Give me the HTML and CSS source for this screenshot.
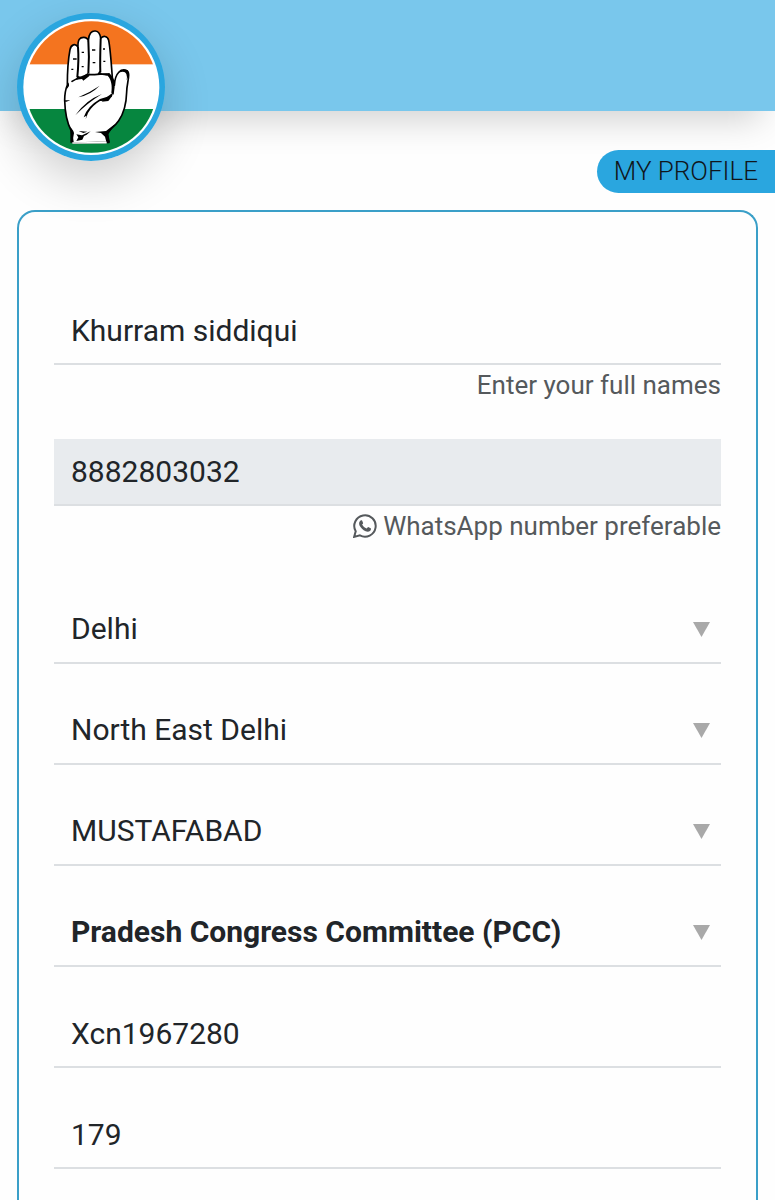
FILE: index.html
```html
<!DOCTYPE html>
<html lang="en">
<head>
    <meta charset="UTF-8">
    <meta name="viewport" content="width=device-width, initial-scale=1.0">
    <title>My Profile</title>
    <link rel="stylesheet" href="styles.css">
</head>
<body>

    <header class="topbar">
        <a href="#" class="logo" aria-label="Home">
            <svg viewBox="51 38 444 444" aria-hidden="true">
                <defs>
                    <clipPath id="disc"><circle cx="274" cy="260" r="197"/></clipPath>
                </defs>
                <circle cx="273" cy="260" r="222" fill="#2aa6df"/>
                <circle cx="274" cy="260" r="204" fill="#fff"/>
                <g clip-path="url(#disc)">
                    <rect x="70" y="55" width="410" height="137" fill="#f4741f"/>
                    <rect x="70" y="326" width="410" height="140" fill="#06863f"/>
                </g>
                <!-- hand -->
                <path d="M219 428 L214 392 C202 370 195 340 194 300 C194 280 197 266 202 254 C202 215 204 180 210 148 C213 132 226 128 234 140 C233 118 239 111 251 111 C258 111 263 115 265 121 C266 100 275 91 286 92 C296 93 301 101 302 115 C308 105 323 106 326 120 C331 145 334 190 337 232 C341 240 342 248 343 255 C344 238 348 224 357 215 C367 205 386 206 386 224 C386 240 380 256 380 275 C379 312 371 340 356 361 C345 377 332 386 322 396 L327 426 Z" fill="#fff" stroke="#000" stroke-width="5" stroke-linejoin="round"/>
                <path d="M234 140 C236 166 235 200 232 230 M265 121 C267 150 267 190 265 219 M302 115 C301 145 300 185 301 216" fill="none" stroke="#000" stroke-width="6"/>
                <!-- palm edge -->
                <path d="M216 243 C232 232 248 230 266 222 C284 226 300 218 320 222" fill="none" stroke="#000" stroke-width="5" stroke-linecap="round"/>
                <path d="M232 226 L246 231 L263 218 L269 226 L250 241 L246 236 L228 238 Z M298 212 L306 220 L328 218 L338 230 L344 260 L341 283 L334 277 C337 256 334 238 323 226 L292 222 Z"/>
                <path d="M340 276 L336 288 L325 302 L305 304 L318 292 Z"/>
                <!-- creases -->
                <path d="M235 291 Q270 276 299 256 Q273 283 235 291 Z M226 345 Q256 300 306 281 Q262 308 226 345 Z"/>
                <path d="M332 286 L322 301 L300 302 Q276 316 264 338 L257 357 L259 346 L251 351 Q262 318 300 296 Z"/>
                <path d="M193 300 L211 300 L197 305 Z M202 254 L207 246 L207 257 L199 268 Z M356 217 Q385 205 380 240 Q390 222 384 210 Q369 202 356 217 Z"/>
                <!-- wrist -->
                <path d="M211 379 L220 392 L222 398 L217 427 L211 427 Z M229 402 L246 405 L272 393 L260 403 L252 407 L247 418 L229 422 L235 411 Z M236 392 L262 394 L250 398 Z M285 395 L318 392 L345 371 L324 403 L329 425 L319 425 L315 409 L303 398 Z"/>
                <path d="M217 428 L320 427" stroke="#fff" stroke-width="5"/>
                <path d="M219 176 H230 M245 156 H252 M276 149 H286 M309 146 H315 M214 207 H220 M245 199 H251 M278 187 H286 M310 183 H316" stroke="#000" stroke-width="4"/>
            </svg>
        </a>
    </header>

    <h1 class="page-title">MY PROFILE</h1>

    <main class="card">
        <form class="profile-form">
            <div class="field">
                <input type="text" class="control" id="fullName" name="fullName" value="Khurram siddiqui">
                <label class="hint" for="fullName">Enter your full names</label>
            </div>

            <div class="field field-phone">
                <input type="tel" class="control" id="phone" name="phone" value="8882803032" readonly>
                <label class="hint" for="phone">
                    <svg class="whatsapp" viewBox="0 0 24 24" aria-hidden="true">
                        <path d="M1.1 22.9 L2.7 17.3 A10.7 10.7 0 1 1 6.9 21.4 Z" fill="none" stroke="currentColor" stroke-width="2"/>
                        <path d="M7.9 6.2 C8.4 6.1 8.9 6.1 9.2 6.7 L10.1 8.9 C10.2 9.4 9.3 10.2 9.1 10.6 C10.2 12.6 11.6 13.7 13.6 14.5 C14.1 14.4 14.7 13.2 15.2 13.1 L17.7 14.3 C18.3 14.7 17.9 16.1 17.3 16.7 C14.1 19.3 9.6 15.9 7.7 13.3 C5.8 10.7 5.4 8 7.9 6.2 Z" fill="currentColor"/>
                    </svg>
                    WhatsApp number preferable
                </label>
            </div>

            <div class="select-wrap">
                <select class="control" name="state" aria-label="State">
                    <option>Delhi</option>
                </select>
            </div>

            <div class="select-wrap">
                <select class="control" name="district" aria-label="District">
                    <option>North East Delhi</option>
                </select>
            </div>

            <div class="select-wrap">
                <select class="control" name="assembly" aria-label="Assembly">
                    <option>MUSTAFABAD</option>
                </select>
            </div>

            <div class="select-wrap">
                <select class="control control-bold" name="committee" aria-label="Committee">
                    <option>Pradesh Congress Committee (PCC)</option>
                </select>
            </div>

            <input type="text" class="control" name="voterId" value="Xcn1967280" aria-label="Voter ID">

            <input type="text" class="control" name="booth" value="179" aria-label="Booth number">
        </form>
    </main>

</body>
</html>
```

FILE: styles.css
```css
* {
    box-sizing: border-box;
}
body {
    display: flex;
    flex-direction: column;
    min-height: 100vh;
    margin: 0;
    background-color: #fefefe;
    color: #212529;
    font-family: Roboto, "Liberation Sans", sans-serif;
}

/* Header */
.topbar {
    height: 111px;
    padding: 13px 17px;
    background-color: #79c7ec;
    box-shadow: 0 22px 36px -14px rgba(0, 0, 0, 0.19);
}
.logo {
    display: block;
    width: 148px;
    height: 148px;
    border-radius: 50%;
    box-shadow: 0 18px 48px rgba(0, 0, 0, 0.19);
}
.logo svg {
    display: block;
}
.page-title {
    align-self: flex-end;
    margin: 39px 0 17px;
    padding: 0 17px;
    border-radius: 22px 0 0 22px;
    background-color: #2aa6df;
    color: #10161c;
    font-size: 26px;
    font-weight: 300;
    line-height: 43px;
}

/* Form */
.card {
    flex: 1;
    margin: 0 17px;
    padding: 86px 35px 30px;
    border: 2px solid #3a9fc8;
    border-bottom: 0;
    border-radius: 18px 18px 0 0;
}
.profile-form {
    display: flex;
    flex-direction: column;
    gap: 34px;
}
.field {
    display: flex;
    flex-direction: column;
}
.field-phone {
    margin-bottom: 17px;
}
.control {
    width: 100%;
    height: 67px;
    padding: 0 17px;
    border: 0;
    border-bottom: 2px solid #dcdfe2;
    border-radius: 0;
    background-color: transparent;
    color: #212529;
    font-family: inherit;
    font-size: 30px;
    appearance: none;
}
.control:focus {
    outline: none;
    border-bottom-color: #2aa6df;
}
.control:read-only:not(select) {
    background-color: #e8ebee;
}
.control-bold {
    font-weight: bold;
}
.hint {
    display: flex;
    align-items: center;
    justify-content: flex-end;
    gap: 6px;
    color: #55595c;
    font-size: 26px;
    line-height: 40px;
}
.whatsapp {
    width: 24px;
    height: 24px;
}

/* Drop-down arrow */
.select-wrap {
    display: grid;
    align-items: center;
}
.select-wrap .control {
    grid-area: 1 / 1;
    padding-bottom: 2px;
}
.select-wrap::after {
    content: "";
    grid-area: 1 / 1;
    justify-self: end;
    width: 17px;
    height: 15px;
    margin: 0 11px 2px 0;
    background-color: #a9a9a9;
    clip-path: polygon(0 0, 100% 0, 50% 100%);
    pointer-events: none;
}
```
